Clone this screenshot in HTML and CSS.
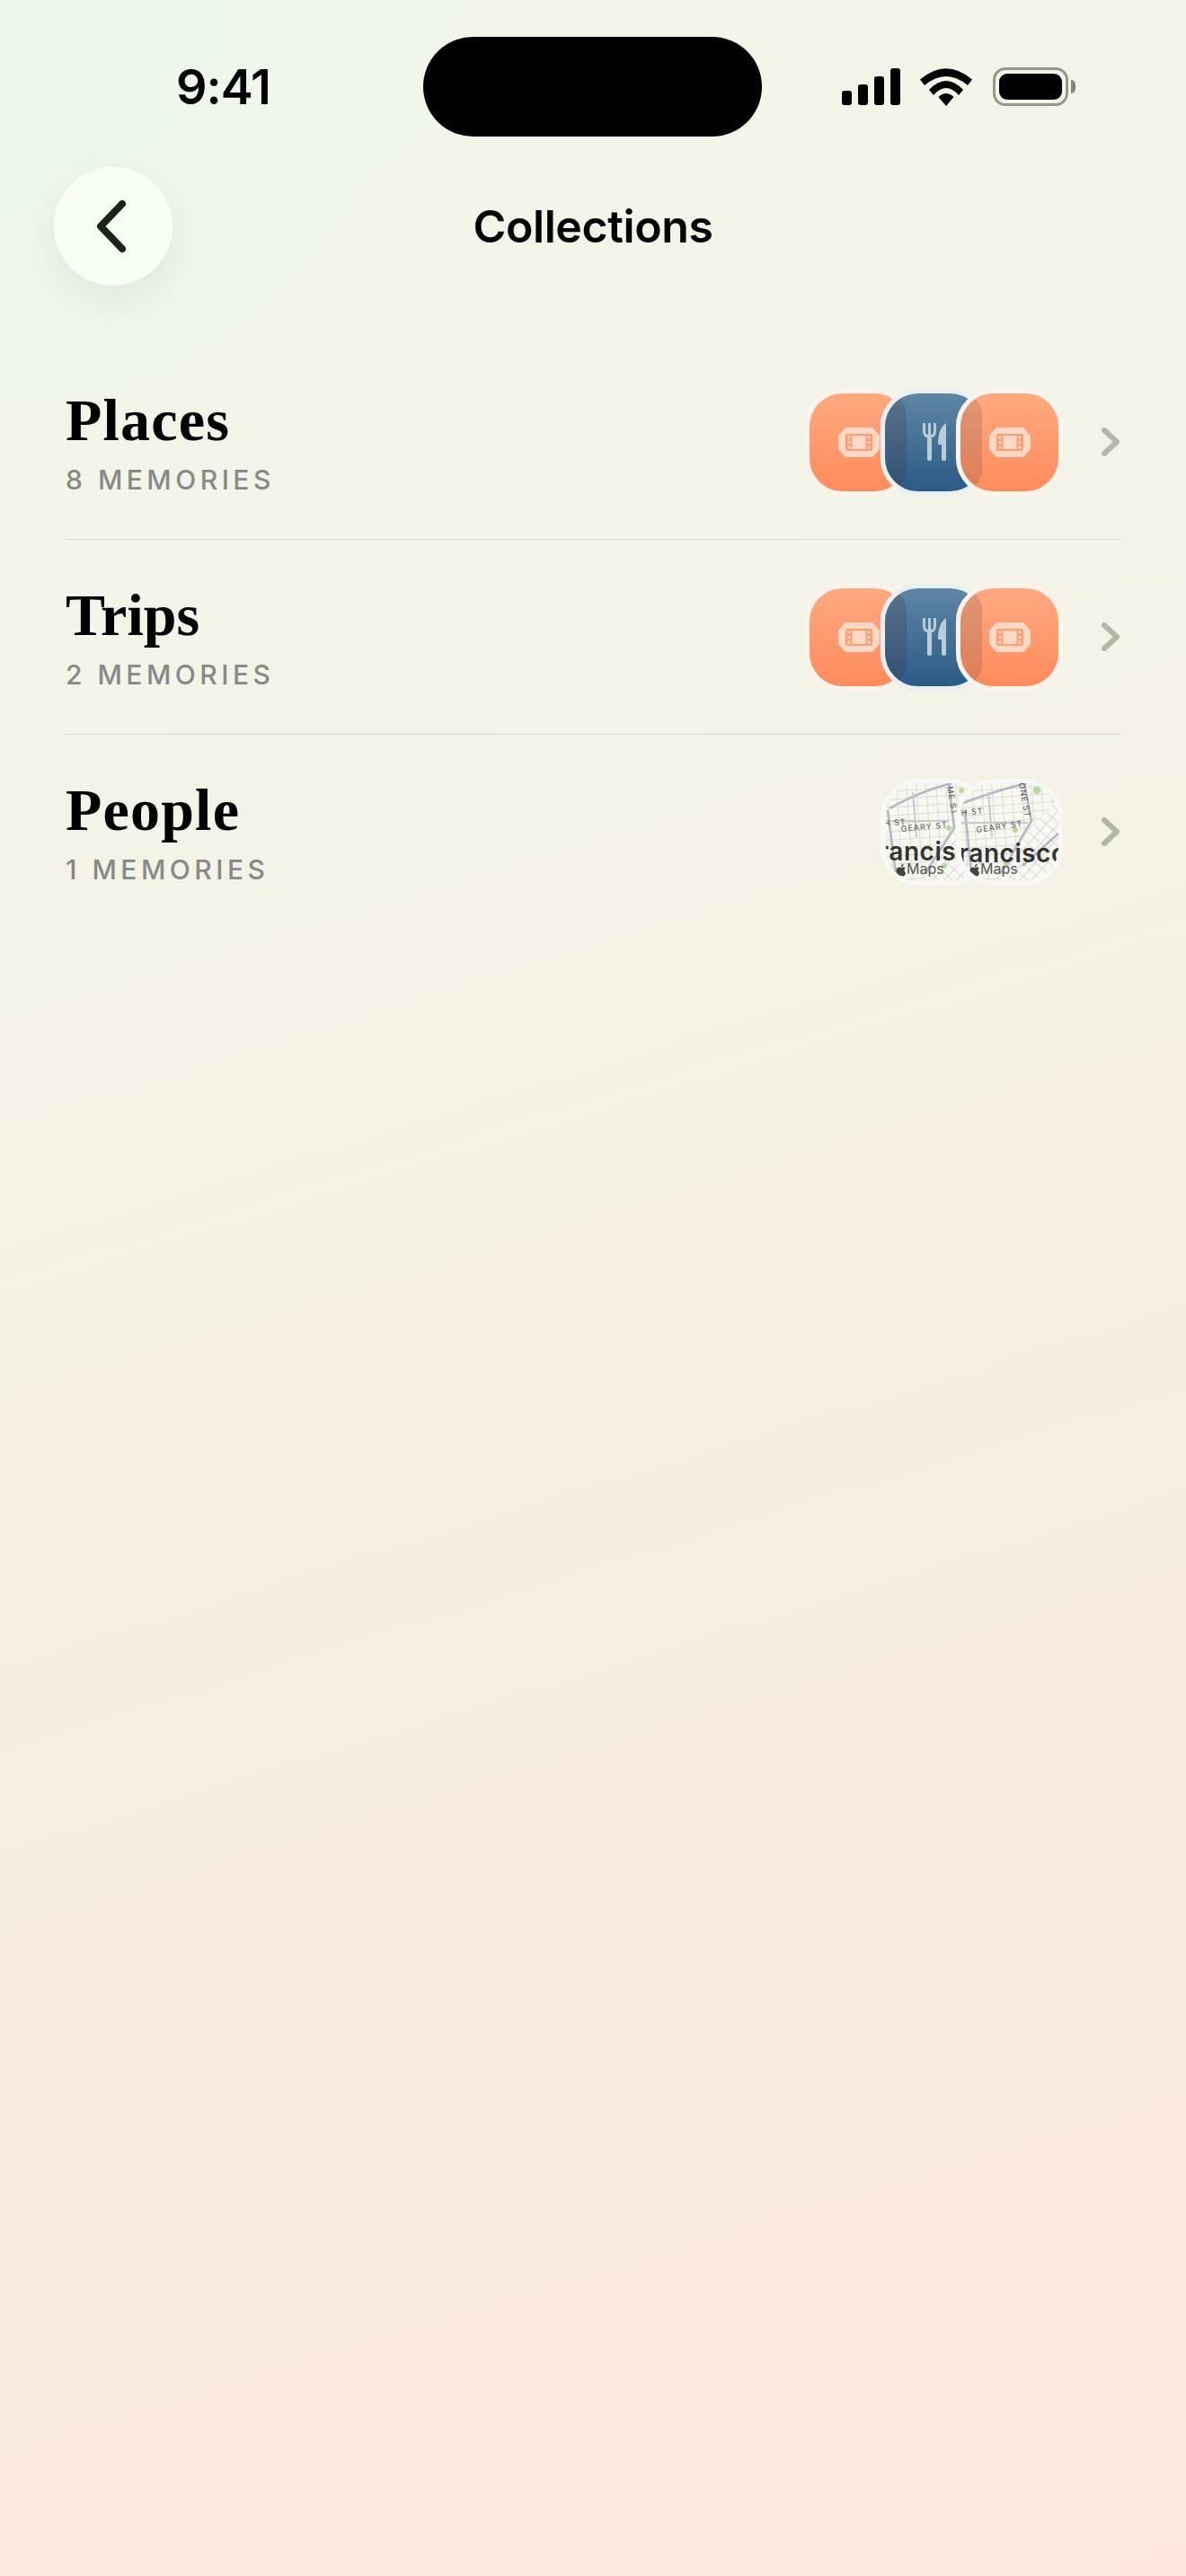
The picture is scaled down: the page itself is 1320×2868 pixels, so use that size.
FILE: index.html
```html
<!DOCTYPE html>
<html lang="en">
<head>
  <meta charset="UTF-8" />
  <meta name="viewport" content="width=device-width, initial-scale=1.0"/>
  <title>Collections</title>
  <link rel="stylesheet" href="styles.css">
</head>
<body>
  <svg class="defs" width="0" height="0" aria-hidden="true">
    <defs>
      <symbol id="ticket" viewBox="0 0 46 33">
        <path class="ticket-out" d="M8 0H38L46 9V24L38 33H8L0 24V9Z"/>
        <rect class="ticket-frame" x="8" y="7" width="30" height="19" rx="2"/>
        <rect class="ticket-out" x="15.5" y="9" width="15" height="15"/>
        <rect class="ticket-out" x="10.5" y="9.5" width="3" height="3"/>
        <rect class="ticket-out" x="10.5" y="15" width="3" height="3"/>
        <rect class="ticket-out" x="10.5" y="20.5" width="3" height="3"/>
        <rect class="ticket-out" x="32.5" y="9.5" width="3" height="3"/>
        <rect class="ticket-out" x="32.5" y="15" width="3" height="3"/>
        <rect class="ticket-out" x="32.5" y="20.5" width="3" height="3"/>
      </symbol>
      <symbol id="cutlery" viewBox="0 0 26 42">
        <path class="fork-top" d="M1.5 1V9Q1.5 15 7.5 15Q13.5 15 13.5 9V1M7.5 1V14"/>
        <path class="fork-stem" d="M7.5 14V39.5"/>
        <path class="knife" d="M26 0C19 5 17 13 17 24H21V39.5A2.5 2.5 0 0 0 26 39.5Z"/>
      </symbol>
      <symbol id="chev" viewBox="0 0 20 32">
        <path d="M3 3L17 16L3 29"/>
      </symbol>
      <pattern id="blocks" width="11" height="9" patternUnits="userSpaceOnUse" patternTransform="rotate(-4)">
        <rect width="11" height="9" fill="#f8f8ee"/>
        <path d="M0 0H11M0 0V9" stroke="#d2d5d8" stroke-width="1.5"/>
      </pattern>
      <pattern id="diag" width="10" height="10" patternUnits="userSpaceOnUse" patternTransform="rotate(42)">
        <rect width="10" height="10" fill="#f9f8f1"/>
        <path d="M0 0H10M0 0V10" stroke="#cfd2d8" stroke-width="1.7"/>
      </pattern>
      <symbol id="apple" viewBox="0 0 14 16">
        <path d="M10.2 8.4C10.2 6.8 11.5 6 11.6 6C10.8 4.9 9.6 4.7 9.2 4.7C8.1 4.6 7.2 5.3 6.6 5.3C6 5.3 5.2 4.7 4.2 4.7C3 4.7 1.8 5.4 1.2 6.5C-.1 8.7.9 12 2.1 13.800C2.7 14.600 3.400 15.600 4.300 15.500C5.200 15.500 5.500 15 6.600 15C7.700 15 8 15.500 8.900 15.500C9.900 15.500 10.500 14.600 11.100 13.800C11.800 12.800 12.100 11.800 12.100 11.800C12.100 11.800 10.200 11 10.200 8.400ZM8.500 3.300C9 2.700 9.300 1.900 9.200 1C8.500 1 7.600 1.500 7.100 2.100C6.600 2.600 6.200 3.500 6.300 4.300C7.100 4.400 8 3.900 8.500 3.300Z"/>
      </symbol>
    </defs>
  </svg>

  <div class="status-bar">
    <span class="time">9:41</span>
    <div class="island"></div>
    <div class="status-icons">
      <div class="signal"><i></i><i></i><i></i><i></i></div>
      <svg class="wifi" width="58" height="42" viewBox="0 0 58 42">
        <path d="M0 12.500Q29 -12 58 12.500L53 19Q29 -1 5 19Z"/>
        <path d="M10 24Q29 4 48 24L43 30Q29 14 15 30Z"/>
        <path d="M29 42L20.500 32Q29 24 37.500 32Z"/>
      </svg>
      <div class="battery"><div class="battery-fill"></div></div>
      <div class="battery-cap"></div>
    </div>
  </div>

  <div class="nav">
    <button class="back">
      <svg width="36" height="60" viewBox="0 0 36 60"><path d="M31 5L7 30L31 55"/></svg>
    </button>
    <h1>Collections</h1>
  </div>

  <div class="list">
    <div class="row">
      <div class="row-text">
        <div class="name">Places</div>
        <div class="count">8 MEMORIES</div>
      </div>
      <div class="thumbs">
        <div class="tile orange"><svg class="ic-ticket"><use href="#ticket"/></svg></div>
        <div class="tile blue"><svg class="ic-cutlery"><use href="#cutlery"/></svg></div>
        <div class="tile orange over"><svg class="ic-ticket"><use href="#ticket"/></svg></div>
      </div>
      <svg class="chevron"><use href="#chev"/></svg>
    </div>

    <div class="row">
      <div class="row-text">
        <div class="name name-tight">Trips</div>
        <div class="count">2 MEMORIES</div>
      </div>
      <div class="thumbs">
        <div class="tile orange"><svg class="ic-ticket"><use href="#ticket"/></svg></div>
        <div class="tile blue"><svg class="ic-cutlery"><use href="#cutlery"/></svg></div>
        <div class="tile orange over"><svg class="ic-ticket"><use href="#ticket"/></svg></div>
      </div>
      <svg class="chevron"><use href="#chev"/></svg>
    </div>

    <div class="row">
      <div class="row-text">
        <div class="name">People</div>
        <div class="count">1 MEMORIES</div>
      </div>
      <div class="thumbs">
        <div class="tile map">
          <svg viewBox="0 0 108 108">
            <rect width="108" height="108" fill="#f8f8ee"/>
            <path d="M0 0H108V28L60 108H0Z" fill="url(#blocks)"/>
            <path d="M108 28V108H40L56 70Z" fill="url(#diag)"/>
            <path class="road" d="M4 28Q40 8 74 0M70 0L76 50L44 100M2 30L12 108"/>
            <path class="road-thin" d="M0 42H70M30 10L34 60"/>
            <circle class="park" cx="70" cy="50" r="3"/>
            <circle class="park" cx="65" cy="92" r="3"/>
            <circle class="park" cx="84" cy="8" r="3"/>
            <text class="map-street" transform="translate(-2 48) rotate(-5)">H ST</text>
            <text class="map-street" transform="translate(17 54) rotate(-5)">GEARY ST</text>
            <text class="map-street" transform="translate(68 4) rotate(80)">ME ST</text>
            <text class="map-city" x="-8" y="86">rancis</text>
            <use class="map-apple" href="#apple" x="11" y="89" width="13" height="15"/>
            <text class="map-brand" x="23" y="101">Maps</text>
          </svg>
        </div>
        <div class="tile map">
          <svg viewBox="0 0 108 108">
            <rect width="108" height="108" fill="#f8f8ee"/>
            <path d="M0 0H108V20L60 108H0Z" fill="url(#blocks)"/>
            <path d="M108 20V108H40L56 70Z" fill="url(#diag)"/>
            <path class="road" d="M2 22Q40 8 72 0M70 0L78 42L44 100M108 56L68 92M4 30L12 108"/>
            <path class="road-thin" d="M0 44H74M30 10L34 60"/>
            <circle class="park" cx="84" cy="8" r="4"/>
            <circle class="park" cx="60" cy="52" r="3"/>
            <circle class="park" cx="50" cy="90" r="3"/>
            <text class="map-street" transform="translate(0 36) rotate(-5)">H ST</text>
            <text class="map-street" transform="translate(17 55) rotate(-8)">GEARY ST</text>
            <text class="map-street" transform="translate(64 0) rotate(80)">ONE ST</text>
            <text class="map-city" x="-3" y="88">rancisco</text>
            <use class="map-apple" href="#apple" x="9" y="89" width="13" height="15"/>
            <text class="map-brand" x="21" y="101">Maps</text>
          </svg>
        </div>
      </div>
      <svg class="chevron"><use href="#chev"/></svg>
    </div>
  </div>
</body>
</html>
```

FILE: styles.css
```css
html, body {
  margin: 0;
  padding: 0;
}

body {
  width: 1320px;
  height: 2868px;
  overflow: hidden;
  font-family: Inter, "Liberation Sans", sans-serif;
  color: #000;
  background:
    radial-gradient(circle at 0 0, rgba(232, 250, 236, 0.6) 0, rgba(232, 250, 236, 0) 560px),
    linear-gradient(163deg, #f0f6e8 0%, #f2f5e8 22%, #f6f0e4 50%, #fbece1 75%, #ffe9df 100%);
}

.defs {
  position: absolute;
}

/* status bar */
.status-bar {
  display: flex;
  align-items: center;
  height: 111px;
  padding: 41px 0 0 196px;
}

.time {
  width: 275px;
  font-size: 54px;
  font-weight: 600;
  letter-spacing: -1px;
}

.island {
  width: 377px;
  height: 111px;
  border-radius: 56px;
  background: #000;
}

.status-icons {
  display: flex;
  align-items: center;
  margin-left: 89px;
}

.signal {
  display: flex;
  align-items: flex-end;
  gap: 7px;
  height: 41px;
}

.signal i {
  display: block;
  width: 11px;
  border-radius: 3px;
  background: #000;
}

.signal i:nth-child(1) { height: 16px; }
.signal i:nth-child(2) { height: 23px; }
.signal i:nth-child(3) { height: 32px; }
.signal i:nth-child(4) { height: 41px; }

.wifi {
  margin-left: 22px;
  fill: #000;
}

.battery {
  box-sizing: border-box;
  width: 84px;
  height: 43px;
  margin-left: 23px;
  padding: 4px;
  border: 3px solid #94978a;
  border-radius: 14px;
}

.battery-fill {
  height: 100%;
  border-radius: 9px;
  background: #000;
}

.battery-cap {
  width: 5px;
  height: 15px;
  margin-left: 3px;
  border-radius: 0 8px 8px 0;
  background: #85887c;
}

/* nav */
.nav {
  position: relative;
  display: flex;
  align-items: center;
  justify-content: center;
  height: 132px;
  margin-top: 34px;
}

.nav h1 {
  margin: 0;
  font-size: 50px;
  font-weight: 600;
  letter-spacing: -0.4px;
}

.back {
  position: absolute;
  left: 60px;
  top: 0;
  display: flex;
  align-items: center;
  justify-content: center;
  width: 132px;
  height: 132px;
  padding: 0 6px 0 0;
  border: none;
  border-radius: 50%;
  background: #f8fff0;
  box-shadow: 0 14px 44px rgba(60, 70, 50, 0.08);
}

.back path {
  fill: none;
  stroke: #1c2216;
  stroke-width: 8;
  stroke-linecap: round;
  stroke-linejoin: round;
}

/* list */
.list {
  margin: 66px 72px 0 73px;
}

.row {
  display: flex;
  align-items: center;
  height: 216px;
  border-bottom: 1px solid #d9dcd0;
}

.row:last-child {
  border-bottom: none;
}

.row-text {
  flex: 1;
}

.name {
  font-family: "Liberation Serif", serif;
  font-size: 66px;
  font-weight: 700;
  line-height: 72px;
  letter-spacing: 1.2px;
}

.name-tight {
  letter-spacing: 0;
}

.count {
  margin-top: 12px;
  font-size: 30px;
  font-weight: 500;
  line-height: 36px;
  letter-spacing: 4.5px;
  color: #88898a;
}

.thumbs {
  display: flex;
  margin-right: 43px;
}

.tile {
  position: relative;
  box-sizing: border-box;
  display: flex;
  align-items: center;
  justify-content: center;
  width: 119px;
  height: 119px;
  border: 5.5px solid #fff3ec;
  border-radius: 42px;
  box-shadow: 0 0 1px rgba(255, 225, 205, 0.8);
  overflow: hidden;
}

.tile + .tile {
  margin-left: -35px;
}

.orange {
  background: linear-gradient(#ffa981, #ff8b5c);
}

.blue {
  border-color: #e9eff3;
  background: linear-gradient(#5f86a4, #2a5a86);
}

.blue::before,
.over::before {
  content: "";
  position: absolute;
  left: 0;
  top: 0;
  bottom: 0;
  width: 24px;
  border-radius: 0 30px 30px 0;
}

.blue::before {
  background: rgba(70, 40, 50, 0.2);
}

.over::before {
  background: rgba(60, 60, 60, 0.17);
}

.map {
  border-color: #f8f9f6;
  background: #f8f8ee;
}

.map svg {
  display: block;
  width: 108px;
  height: 108px;
}

.ic-ticket {
  width: 46px;
  height: 33px;
}

.ticket-out { fill: #ffd9c6; }
.ticket-frame { fill: #ff9c72; }

.ic-cutlery {
  position: relative;
  width: 26px;
  height: 42px;
}

.fork-top,
.fork-stem {
  fill: none;
  stroke: #b9ccda;
  stroke-linecap: round;
}

.fork-top { stroke-width: 3; }
.fork-stem { stroke-width: 5; }
.knife { fill: #b9ccda; }

.road,
.road-thin {
  fill: none;
}

.road { stroke-width: 2.6; stroke: #b4b8c2; }
.road-thin { stroke-width: 2; stroke: #c6c9ce; }
.park { fill: #b5d89a; }

.map-street {
  font-size: 9px;
  letter-spacing: 1px;
  fill: #555;
}

.map-city {
  font-size: 28px;
  font-weight: 600;
  letter-spacing: 0.5px;
  fill: #333;
}

.map-brand {
  font-size: 16px;
  fill: #555;
}

.map-apple {
  fill: #444;
}

.chevron {
  width: 20px;
  height: 32px;
  margin-right: 2px;
  fill: none;
  stroke: #b4b6a8;
  stroke-width: 6;
  stroke-linecap: round;
  stroke-linejoin: round;
}
```
